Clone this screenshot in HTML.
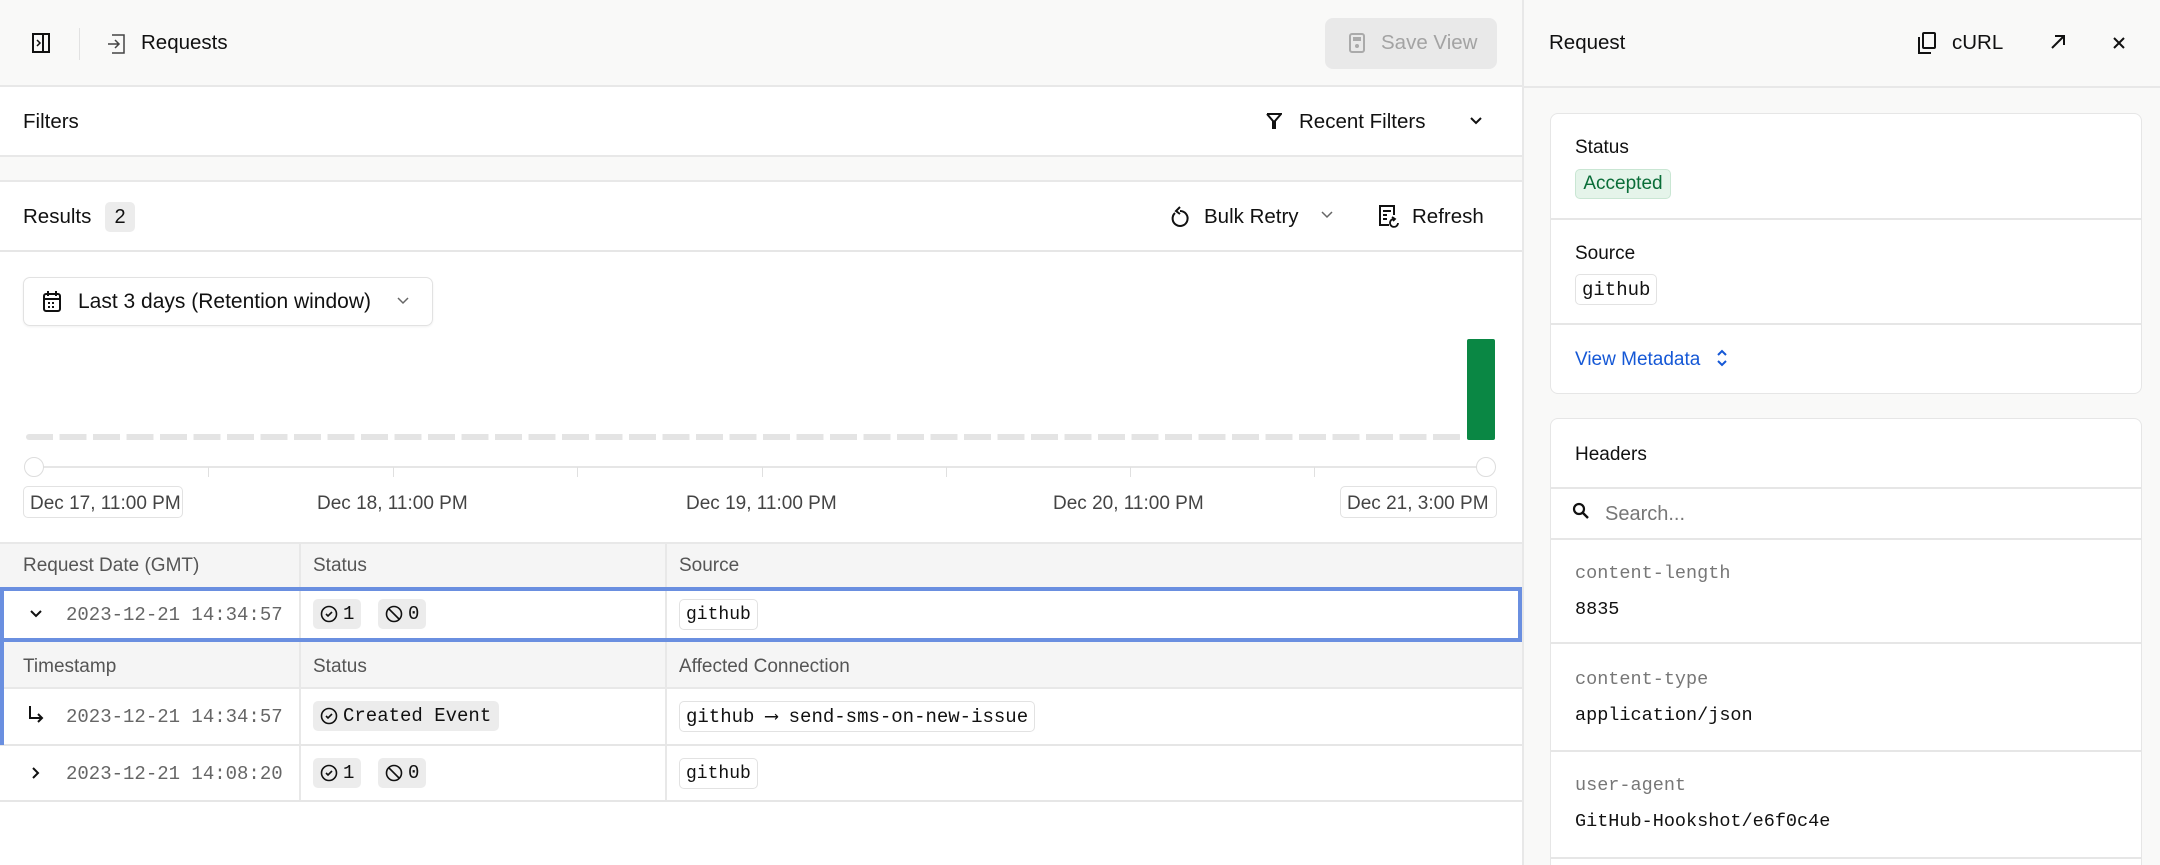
<!DOCTYPE html>
<html style="width:2160px;height:865px;overflow:hidden"><head><meta charset="utf-8"><style>
*{box-sizing:border-box;margin:0;padding:0}
body{width:2160px;height:865px;overflow:hidden;background:#fff;font-family:"Liberation Sans",sans-serif;color:#111;font-size:20px;position:relative}
#w{position:absolute;left:0;top:0;width:2160px;height:865px;overflow:hidden}
.a{position:absolute}
.mono{font-family:"Liberation Mono",monospace}
.t{position:absolute;white-space:nowrap;line-height:1}
.badge{position:absolute;background:#ececec;border-radius:5px;height:30px;display:flex;align-items:center;padding:0 7px;font-family:"Liberation Mono",monospace;font-size:18px;gap:5px}
.code{position:absolute;background:#fff;border:1px solid #e2e2e2;border-radius:5px;height:31px;display:flex;align-items:center;padding:0 6px;font-family:"Liberation Mono",monospace;font-size:18px}
svg{display:block}
.hl{position:absolute;height:1px;background:#e6e6e6}
</style></head><body><div id="w">
<div class="a" style="left:0;top:0;width:1522px;height:87px;background:#f9f9f8;border-bottom:2px solid #e8e8e8"></div>
<svg class="a" style="left:32px;top:33px" width="18" height="20" viewBox="0 0 18 20"><rect x="1" y="1" width="16" height="18" fill="none" stroke="#111" stroke-width="2"/><line x1="11" y1="1" x2="11" y2="19" stroke="#111" stroke-width="2"/><path d="M5 7l3 3-3 3" fill="none" stroke="#111" stroke-width="1.5"/></svg>
<div class="a" style="left:79px;top:28px;width:1px;height:32px;background:#e2e2e2"></div>
<svg class="a" style="left:107px;top:34px" width="18" height="20" viewBox="0 0 18 20"><path d="M5 1h12v18H5" fill="none" stroke="#444" stroke-width="1.5"/><path d="M1 10h10M8 6l4 4-4 4" fill="none" stroke="#444" stroke-width="1.5"/></svg>
<div class="t" style="left:141px;top:33px;font-size:20.5px">Requests</div>
<div class="a" style="left:1325px;top:18px;width:172px;height:51px;background:#e9e9e9;border-radius:8px"></div>
<svg class="a" style="left:1349px;top:33px" width="16" height="20" viewBox="0 0 16 20"><rect x="1" y="1" width="14" height="18" rx="2" fill="none" stroke="#aaa" stroke-width="2"/><rect x="4" y="4" width="8" height="4" fill="#aaa"/><circle cx="8" cy="13" r="2" fill="#aaa"/></svg>
<div class="t" style="left:1381px;top:33px;color:#a3a3a3;font-size:20.5px">Save View</div>
<div class="t" style="left:23px;top:112px;font-size:20.5px">Filters</div>
<svg class="a" style="left:1266px;top:112px" width="16" height="18" viewBox="0 0 16 18"><path d="M1 2h14L9 9v8M7 17V9L1 2" fill="none" stroke="#111" stroke-width="2"/></svg>
<div class="t" style="left:1299px;top:112px;font-size:20.5px">Recent Filters</div>
<svg class="a" style="left:1469px;top:116px" width="14" height="10" viewBox="0 0 14 10"><path d="M2 2l5 5 5-5" fill="none" stroke="#111" stroke-width="2"/></svg>
<div class="a" style="left:0;top:155px;width:1522px;height:27px;background:#f9f9f8;border-top:2px solid #e8e8e8;border-bottom:2px solid #e8e8e8"></div>
<div class="t" style="left:23px;top:207px;font-size:20.5px">Results</div>
<div class="a" style="left:105px;top:202px;width:30px;height:30px;background:#ececec;border-radius:5px;text-align:center;line-height:30px">2</div>
<svg class="a" style="left:1170px;top:205px" width="20" height="24" viewBox="0 0 20 24"><path d="M5 8A7.5 7.5 0 1 0 10 6" fill="none" stroke="#111" stroke-width="2"/><path d="M10 2l-4 4 4 3" fill="none" stroke="#111" stroke-width="2"/></svg>
<div class="t" style="left:1204px;top:207px;font-size:20.5px">Bulk Retry</div>
<svg class="a" style="left:1321px;top:211px" width="12" height="8" viewBox="0 0 12 8"><path d="M1 1l5 5 5-5" fill="none" stroke="#666" stroke-width="1.5"/></svg>
<svg class="a" style="left:1378px;top:204px" width="22" height="26" viewBox="0 0 22 26"><path d="M11 21H2V2h14v9" fill="none" stroke="#111" stroke-width="2"/><path d="M5 7h8M5 11h4M5 15h4" stroke="#111" stroke-width="2"/><path d="M20 19a4 4 0 1 1-3-4M14 13l3 2-2 2" fill="none" stroke="#111" stroke-width="1.8"/></svg>
<div class="t" style="left:1412px;top:207px;font-size:20.5px">Refresh</div>
<div class="hl" style="left:0;top:250px;width:1522px;height:2px"></div>
<div class="a" style="left:23px;top:277px;width:410px;height:49px;border:1px solid #e2e2e2;border-radius:7px;box-shadow:0 1px 2px rgba(0,0,0,.06)"></div>
<svg class="a" style="left:43px;top:290px" width="18" height="22" viewBox="0 0 18 22"><rect x="1" y="4" width="16" height="17" rx="2" fill="none" stroke="#111" stroke-width="2"/><path d="M1 9h16M5 1v5M13 1v5" stroke="#111" stroke-width="2"/><path d="M5 13h2M9 13h2M5 17h2M9 17h2" stroke="#111" stroke-width="2"/></svg>
<div class="t" style="left:78px;top:291px;font-size:21px">Last 3 days (Retention window)</div>
<svg class="a" style="left:397px;top:297px" width="12" height="8" viewBox="0 0 12 8"><path d="M1 1l5 5 5-5" fill="none" stroke="#666" stroke-width="1.5"/></svg>
<div class="a" style="left:26px;top:434px;width:1436px;height:6px;background:repeating-linear-gradient(90deg,#e4e4e4 0 27px,transparent 27px 33.5px);border-radius:3px"></div>
<div class="a" style="left:1467px;top:339px;width:28px;height:101px;background:#0a8744;border-radius:2px"></div>
<div class="a" style="left:33px;top:466px;width:1453px;height:2px;background:#e6e6e6"></div>
<div class="a" style="left:208px;top:467px;width:1px;height:10px;background:#e0e0e0"></div>
<div class="a" style="left:393px;top:467px;width:1px;height:10px;background:#e0e0e0"></div>
<div class="a" style="left:577px;top:467px;width:1px;height:10px;background:#e0e0e0"></div>
<div class="a" style="left:762px;top:467px;width:1px;height:10px;background:#e0e0e0"></div>
<div class="a" style="left:946px;top:467px;width:1px;height:10px;background:#e0e0e0"></div>
<div class="a" style="left:1130px;top:467px;width:1px;height:10px;background:#e0e0e0"></div>
<div class="a" style="left:1314px;top:467px;width:1px;height:10px;background:#e0e0e0"></div>
<div class="a" style="left:24px;top:457px;width:20px;height:20px;border-radius:50%;background:#fff;border:1.5px solid #ddd"></div>
<div class="a" style="left:1476px;top:457px;width:20px;height:20px;border-radius:50%;background:#fff;border:1.5px solid #ddd"></div>
<div class="a" style="left:23px;top:486px;width:160px;height:32px;border:1px solid #e2e2e2;border-radius:5px"></div>
<div class="t" style="left:30px;top:494px;color:#444;font-size:19px">Dec 17, 11:00 PM</div>
<div class="t" style="left:317px;top:494px;color:#444;font-size:19px">Dec 18, 11:00 PM</div>
<div class="t" style="left:686px;top:494px;color:#444;font-size:19px">Dec 19, 11:00 PM</div>
<div class="t" style="left:1053px;top:494px;color:#444;font-size:19px">Dec 20, 11:00 PM</div>
<div class="a" style="left:1340px;top:486px;width:157px;height:32px;border:1px solid #e2e2e2;border-radius:5px"></div>
<div class="t" style="left:1347px;top:494px;color:#444;font-size:19px">Dec 21, 3:00 PM</div>
<div class="a" style="left:0;top:542px;width:1522px;height:45px;background:#f5f5f5;border-top:2px solid #e8e8e8"></div>
<div class="t" style="left:23px;top:556px;color:#555;font-size:19px">Request Date (GMT)</div>
<div class="t" style="left:313px;top:556px;color:#555;font-size:19px">Status</div>
<div class="t" style="left:679px;top:556px;color:#555;font-size:19px">Source</div>
<div class="a" style="left:0;top:641px;width:1522px;height:48px;background:#f5f5f5;border-bottom:2px solid #e8e8e8"></div>
<div class="t" style="left:23px;top:657px;color:#555;font-size:19px">Timestamp</div>
<div class="t" style="left:313px;top:657px;color:#555;font-size:19px">Status</div>
<div class="t" style="left:679px;top:657px;color:#555;font-size:19px">Affected Connection</div>
<div class="a" style="left:299px;top:543px;width:2px;height:259px;background:#e8e8e8"></div>
<div class="a" style="left:665px;top:543px;width:2px;height:259px;background:#e8e8e8"></div>
<div class="hl" style="left:0;top:744px;width:1522px;height:2px"></div>
<div class="hl" style="left:0;top:800px;width:1522px;height:2px"></div>
<div class="a" style="left:0;top:587px;width:1522px;height:55px;border:4px solid #6a8fe0;background:transparent"></div>
<div class="a" style="left:0;top:642px;width:4px;height:103px;background:#6a8fe0"></div>
<svg class="a" style="left:29px;top:609px" width="14" height="10" viewBox="0 0 14 10"><path d="M2 2l5 5 5-5" fill="none" stroke="#111" stroke-width="2"/></svg>
<div class="t mono" style="left:66px;top:606px;color:#666;font-size:19px">2023-12-21 14:34:57</div>
<div class="badge" style="left:313px;top:599px;font-size:19px"><svg width="18" height="18" viewBox="0 0 18 18"><circle cx="9" cy="9" r="7.5" fill="none" stroke="#111" stroke-width="1.6"/><path d="M6 9l2 2 4-4" fill="none" stroke="#111" stroke-width="1.6"/></svg>1</div>
<div class="badge" style="left:378px;top:599px;font-size:19px"><svg width="18" height="18" viewBox="0 0 18 18"><circle cx="9" cy="9" r="7.5" fill="none" stroke="#111" stroke-width="1.6"/><path d="M4 4l10 10" stroke="#111" stroke-width="1.6"/></svg>0</div>
<div class="code" style="left:679px;top:599px">github</div>
<svg class="a" style="left:27px;top:705px" width="18" height="20" viewBox="0 0 18 20"><path d="M3 1v12h12M11 9l4 4-4 4" fill="none" stroke="#111" stroke-width="2"/></svg>
<div class="t mono" style="left:66px;top:708px;color:#666;font-size:19px">2023-12-21 14:34:57</div>
<div class="badge" style="left:313px;top:701px;padding-right:8px;font-size:19px"><svg width="18" height="18" viewBox="0 0 18 18"><circle cx="9" cy="9" r="7.5" fill="none" stroke="#111" stroke-width="1.6"/><path d="M6 9l2 2 4-4" fill="none" stroke="#111" stroke-width="1.6"/></svg>Created Event</div>
<div class="code" style="left:679px;top:701px;font-size:19px">github ⟶ send-sms-on-new-issue</div>
<svg class="a" style="left:31px;top:766px" width="10" height="14" viewBox="0 0 10 14"><path d="M2 2l5 5-5 5" fill="none" stroke="#111" stroke-width="2"/></svg>
<div class="t mono" style="left:66px;top:765px;color:#666;font-size:19px">2023-12-21 14:08:20</div>
<div class="badge" style="left:313px;top:758px;font-size:19px"><svg width="18" height="18" viewBox="0 0 18 18"><circle cx="9" cy="9" r="7.5" fill="none" stroke="#111" stroke-width="1.6"/><path d="M6 9l2 2 4-4" fill="none" stroke="#111" stroke-width="1.6"/></svg>1</div>
<div class="badge" style="left:378px;top:758px;font-size:19px"><svg width="18" height="18" viewBox="0 0 18 18"><circle cx="9" cy="9" r="7.5" fill="none" stroke="#111" stroke-width="1.6"/><path d="M4 4l10 10" stroke="#111" stroke-width="1.6"/></svg>0</div>
<div class="code" style="left:679px;top:758px">github</div>
<div class="a" style="left:1522px;top:0;width:638px;height:865px;background:#f9f9f8;border-left:2px solid #e8e8e8"></div>
<div class="hl" style="left:1522px;top:86px;width:638px;height:2px;background:#e8e8e8"></div>
<div class="t" style="left:1549px;top:33px;font-size:20.5px">Request</div>
<svg class="a" style="left:1918px;top:32px" width="18" height="22" viewBox="0 0 18 22"><rect x="5" y="1" width="12" height="15" rx="1" fill="none" stroke="#111" stroke-width="2"/><path d="M1 5v16h12" fill="none" stroke="#111" stroke-width="2"/></svg>
<div class="t" style="left:1952px;top:33px;font-size:20.5px">cURL</div>
<svg class="a" style="left:2050px;top:34px" width="16" height="16" viewBox="0 0 16 16"><path d="M2 14L14 2M5 2h9v9" fill="none" stroke="#111" stroke-width="2"/></svg>
<svg class="a" style="left:2112px;top:36px" width="14" height="14" viewBox="0 0 14 14"><path d="M2 2l10 10M12 2L2 12" stroke="#111" stroke-width="2"/></svg>
<div class="a" style="left:1550px;top:113px;width:592px;height:281px;background:#fff;border:1px solid #e6e6e6;border-radius:8px"></div>
<div class="t" style="left:1575px;top:138px;font-size:19px">Status</div>
<div class="a" style="left:1575px;top:169px;width:96px;height:30px;background:#e5f4ea;border:1px solid #c9e6d3;border-radius:5px;color:#0a6d38;font-size:19px;text-align:center;line-height:28px">Accepted</div>
<div class="hl" style="left:1551px;top:218px;width:590px;height:2px"></div>
<div class="t" style="left:1575px;top:244px;font-size:19px">Source</div>
<div class="code" style="left:1575px;top:274px;font-size:19px">github</div>
<div class="hl" style="left:1551px;top:323px;width:590px;height:2px"></div>
<div class="t" style="left:1575px;top:350px;color:#1558d6;font-size:19px">View Metadata</div>
<svg class="a" style="left:1716px;top:348px" width="12" height="20" viewBox="0 0 12 20"><path d="M2 7l4-4 4 4M2 13l4 4 4-4" fill="none" stroke="#1558d6" stroke-width="2"/></svg>
<div class="a" style="left:1550px;top:418px;width:592px;height:447px;background:#fff;border:1px solid #e6e6e6;border-bottom:none;border-radius:8px 8px 0 0"></div>
<div class="t" style="left:1575px;top:445px;font-size:19px">Headers</div>
<div class="hl" style="left:1551px;top:487px;width:590px;height:2px"></div>
<svg class="a" style="left:1572px;top:502px" width="18" height="18" viewBox="0 0 18 18"><circle cx="7" cy="7" r="5" fill="none" stroke="#111" stroke-width="2.2"/><path d="M11 11l5 5" stroke="#111" stroke-width="2.4"/></svg>
<div class="t" style="left:1605px;top:504px;color:#777;font-size:20px">Search...</div>
<div class="hl" style="left:1551px;top:538px;width:590px;height:2px"></div>
<div class="t mono" style="left:1575px;top:565px;color:#777;font-size:18.5px">content-length</div>
<div class="t mono" style="left:1575px;top:601px;font-size:18.5px">8835</div>
<div class="hl" style="left:1551px;top:642px;width:590px;height:2px"></div>
<div class="t mono" style="left:1575px;top:671px;color:#777;font-size:18.5px">content-type</div>
<div class="t mono" style="left:1575px;top:707px;font-size:18.5px">application/json</div>
<div class="hl" style="left:1551px;top:750px;width:590px;height:2px"></div>
<div class="t mono" style="left:1575px;top:777px;color:#777;font-size:18.5px">user-agent</div>
<div class="t mono" style="left:1575px;top:813px;font-size:18.5px">GitHub-Hookshot/e6f0c4e</div>
<div class="hl" style="left:1551px;top:857px;width:590px;height:2px"></div>
</div></body></html>
